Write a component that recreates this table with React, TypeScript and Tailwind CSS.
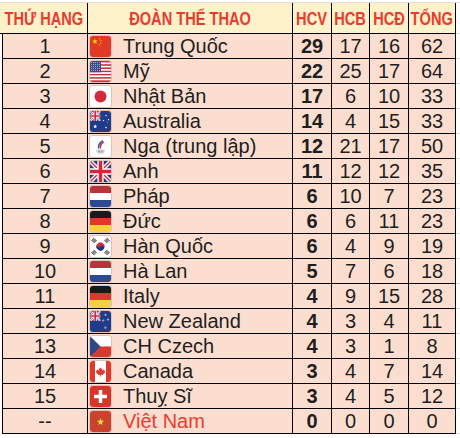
import React from "react";

type FlagCode = "cn" | "us" | "jp" | "au" | "roc" | "gb" | "nl" | "de" | "kr" | "nz" | "cz" | "ca" | "ch" | "vn";

interface MedalRow {
  rank: string;
  name: string;
  flag: FlagCode;
  gold: number;
  silver: number;
  bronze: number;
  total: number;
  highlight?: boolean;
}

const rows: MedalRow[] = [
  { rank: "1", name: "Trung Quốc", flag: "cn", gold: 29, silver: 17, bronze: 16, total: 62 },
  { rank: "2", name: "Mỹ", flag: "us", gold: 22, silver: 25, bronze: 17, total: 64 },
  { rank: "3", name: "Nhật Bản", flag: "jp", gold: 17, silver: 6, bronze: 10, total: 33 },
  { rank: "4", name: "Australia", flag: "au", gold: 14, silver: 4, bronze: 15, total: 33 },
  { rank: "5", name: "Nga (trung lập)", flag: "roc", gold: 12, silver: 21, bronze: 17, total: 50 },
  { rank: "6", name: "Anh", flag: "gb", gold: 11, silver: 12, bronze: 12, total: 35 },
  { rank: "7", name: "Pháp", flag: "nl", gold: 6, silver: 10, bronze: 7, total: 23 },
  { rank: "8", name: "Đức", flag: "de", gold: 6, silver: 6, bronze: 11, total: 23 },
  { rank: "9", name: "Hàn Quốc", flag: "kr", gold: 6, silver: 4, bronze: 9, total: 19 },
  { rank: "10", name: "Hà Lan", flag: "nl", gold: 5, silver: 7, bronze: 6, total: 18 },
  { rank: "11", name: "Italy", flag: "de", gold: 4, silver: 9, bronze: 15, total: 28 },
  { rank: "12", name: "New Zealand", flag: "nz", gold: 4, silver: 3, bronze: 4, total: 11 },
  { rank: "13", name: "CH Czech", flag: "cz", gold: 4, silver: 3, bronze: 1, total: 8 },
  { rank: "14", name: "Canada", flag: "ca", gold: 3, silver: 4, bronze: 7, total: 14 },
  { rank: "15", name: "Thuỵ Sĩ", flag: "ch", gold: 3, silver: 4, bronze: 5, total: 12 },
  { rank: "--", name: "Việt Nam", flag: "vn", gold: 0, silver: 0, bronze: 0, total: 0, highlight: true },
];

function star(cx: number, cy: number, r: number, rot = -90) {
  const pts: string[] = [];
  for (let i = 0; i < 10; i++) {
    const rr = i % 2 === 0 ? r : r * 0.4;
    const a = ((rot + i * 36) * Math.PI) / 180;
    pts.push(`${(cx + rr * Math.cos(a)).toFixed(2)},${(cy + rr * Math.sin(a)).toFixed(2)}`);
  }
  return pts.join(" ");
}

function UnionJack({ x, y, w, h }: { x: number; y: number; w: number; h: number }) {
  return (
    <svg x={x} y={y} width={w} height={h} viewBox="0 0 60 60" preserveAspectRatio="none">
      <rect width="60" height="60" fill="#1f3c8c" />
      <path d="M0 0L60 60M60 0L0 60" stroke="#fff" strokeWidth="12" />
      <path d="M0 0L60 60M60 0L0 60" stroke="#d0283a" strokeWidth="4" />
      <path d="M30 0V60M0 30H60" stroke="#fff" strokeWidth="18" />
      <path d="M30 0V60M0 30H60" stroke="#d0283a" strokeWidth="10" />
    </svg>
  );
}

function Trigram({ x, y, rot }: { x: number; y: number; rot: number }) {
  return (
    <g transform={`rotate(${rot} ${x} ${y})`} fill="#222">
      <rect x={x - 2} y={y - 1.9} width="4" height="0.8" />
      <rect x={x - 2} y={y - 0.4} width="4" height="0.8" />
      <rect x={x - 2} y={y + 1.1} width="4" height="0.8" />
    </g>
  );
}

function FlagArt({ code }: { code: FlagCode }) {
  switch (code) {
    case "cn":
      return (
        <>
          <rect width="21" height="21" fill="#e03a26" />
          <polygon points={star(5, 5.5, 3)} fill="#ffd800" />
          <polygon points={star(9.5, 2.5, 1)} fill="#ffd800" />
          <polygon points={star(11, 4.5, 1)} fill="#ffd800" />
          <polygon points={star(11, 7, 1)} fill="#ffd800" />
          <polygon points={star(9.5, 9, 1)} fill="#ffd800" />
        </>
      );
    case "us": {
      const stripes = [];
      for (let i = 0; i < 13; i++) {
        stripes.push(
          <rect key={i} y={(21 / 13) * i} width="21" height={21 / 13 + 0.05} fill={i % 2 === 0 ? "#c1303f" : "#ffffff"} />
        );
      }
      const dots = [];
      for (let r = 0; r < 5; r++) {
        for (let c = 0; c < 5; c++) {
          dots.push(<rect key={`${r}-${c}`} x={1 + c * 2} y={1 + r * 2} width="0.8" height="0.8" fill="#d8dcef" />);
        }
      }
      return (
        <>
          {stripes}
          <rect width="11" height="11.3" fill="#404a86" />
          {dots}
        </>
      );
    }
    case "jp":
      return (
        <>
          <rect width="21" height="21" fill="#ffffff" />
          <circle cx="10.5" cy="10.5" r="6" fill="#cf2b3d" />
        </>
      );
    case "au":
      return (
        <>
          <rect width="21" height="21" fill="#1f3c8c" />
          <UnionJack x={0} y={0} w={10.5} h={10} />
          <polygon points={star(5.2, 15.5, 2.2)} fill="#fff" />
          <polygon points={star(16, 4.5, 1.1)} fill="#fff" />
          <polygon points={star(13.5, 9.5, 1.1)} fill="#fff" />
          <polygon points={star(18.5, 8.5, 1.1)} fill="#fff" />
          <polygon points={star(16, 16.5, 1.2)} fill="#fff" />
          <polygon points={star(17.5, 11.5, 0.6)} fill="#fff" />
        </>
      );
    case "roc":
      return (
        <>
          <rect width="21" height="21" fill="#ffffff" />
          <path d="M8.6 12.5C8 9.5 9.5 6.8 12.6 4.6" stroke="#2d55b8" strokeWidth="1.5" fill="none" />
          <path d="M10.4 12.5C9.9 9.8 11.2 7.4 13.8 5.8" stroke="#d52b2b" strokeWidth="1.5" fill="none" />
          <g fill="none" stroke="#8a8a8a" strokeWidth="0.5">
            <circle cx="7.9" cy="15" r="1.2" />
            <circle cx="10.5" cy="15" r="1.2" />
            <circle cx="13.1" cy="15" r="1.2" />
            <circle cx="9.2" cy="16.2" r="1.2" />
            <circle cx="11.8" cy="16.2" r="1.2" />
          </g>
        </>
      );
    case "gb":
      return <UnionJack x={0} y={0} w={21} h={21} />;
    case "nl":
      return (
        <>
          <rect width="21" height="7" fill="#b8343a" />
          <rect y="7" width="21" height="7" fill="#ffffff" />
          <rect y="14" width="21" height="7" fill="#2c4a92" />
        </>
      );
    case "de":
      return (
        <>
          <rect width="21" height="7" fill="#1a1a1a" />
          <rect y="7" width="21" height="7" fill="#e0392b" />
          <rect y="14" width="21" height="7" fill="#f9cf3b" />
        </>
      );
    case "kr":
      return (
        <>
          <rect width="21" height="21" fill="#ffffff" />
          <g transform="rotate(33.7 10.5 10.5)">
            <circle cx="10.5" cy="10.5" r="4" fill="#cd2e3a" />
            <path d="M6.5 10.5A4 4 0 0 0 14.5 10.5A2 2 0 0 0 10.5 10.5A2 2 0 0 1 6.5 10.5Z" fill="#0f3c8a" />
          </g>
          <Trigram x={4} y={4.5} rot={-45} />
          <Trigram x={17} y={4.5} rot={45} />
          <Trigram x={4} y={16.5} rot={45} />
          <Trigram x={17} y={16.5} rot={-45} />
        </>
      );
    case "nz":
      return (
        <>
          <rect width="21" height="21" fill="#1f3c8c" />
          <UnionJack x={0} y={0} w={10.5} h={10} />
          <polygon points={star(15.5, 16.5, 1.6)} fill="#fff" />
          <polygon points={star(15.5, 16.5, 1)} fill="#d0283a" />
          <polygon points={star(13.3, 9.5, 1.4)} fill="#fff" />
          <polygon points={star(13.3, 9.5, 0.9)} fill="#d0283a" />
          <polygon points={star(18, 8.5, 1.4)} fill="#fff" />
          <polygon points={star(18, 8.5, 0.9)} fill="#d0283a" />
          <polygon points={star(15.5, 4, 1.4)} fill="#fff" />
          <polygon points={star(15.5, 4, 0.9)} fill="#d0283a" />
        </>
      );
    case "cz":
      return (
        <>
          <rect width="21" height="10.5" fill="#ffffff" />
          <rect y="10.5" width="21" height="10.5" fill="#d73a2f" />
          <polygon points="0,0 10.5,10.5 0,21" fill="#2c4a8a" />
        </>
      );
    case "ca":
      return (
        <>
          <rect width="21" height="21" fill="#ffffff" />
          <rect width="5" height="21" fill="#dc3a2c" />
          <rect x="16" width="5" height="21" fill="#dc3a2c" />
          <path
            d="M10.5 6.2L11.3 7.8L12.4 7.4L12 9.8L13.6 8.6L14 9.5L15.1 9.3L14.6 11.1L15.3 11.5L12.8 13.2L13 14L11 13.8L10.8 15.8L10.2 15.8L10 13.8L8 14L8.2 13.2L5.7 11.5L6.4 11.1L5.9 9.3L7 9.5L7.4 8.6L9 9.8L8.6 7.4L9.7 7.8Z"
            fill="#dc3a2c"
          />
        </>
      );
    case "ch":
      return (
        <>
          <rect width="21" height="21" fill="#d9342a" />
          <rect x="8.75" y="4" width="3.5" height="13" fill="#fff" />
          <rect x="4" y="8.75" width="13" height="3.5" fill="#fff" />
        </>
      );
    case "vn":
      return (
        <>
          <rect width="21" height="21" fill="#c9432f" />
          <polygon points={star(10.5, 11, 3.8)} fill="#ffe53b" />
        </>
      );
  }
}

function Flag({ code }: { code: FlagCode }) {
  return (
    <div className="w-[21px] h-[21px] shrink-0 rounded-[3px] overflow-hidden shadow-[0_0_0_1px_rgba(0,0,0,0.12)]">
      <svg width="21" height="21" viewBox="0 0 21 21" className="block">
        <FlagArt code={code} />
      </svg>
    </div>
  );
}

function HeadCell({ label, className }: { label: string; className: string }) {
  return (
    <div className={`${className} h-full flex items-center justify-center border-r border-black pt-[2px]`}>
      <span className="inline-block whitespace-nowrap scale-x-[0.79] text-[18.5px] font-bold leading-none text-[#eb3b2e]">
        {label}
      </span>
    </div>
  );
}

export default function App() {
  return (
    <div
      className="w-[460px] h-[438px] bg-white overflow-hidden"
      style={{ fontFamily: '"Liberation Sans", Arial, Helvetica, sans-serif' }}
    >
      {/* spreadsheet strip above the table */}
      <div className="h-[3px] border-b border-[#dedede]" />

      {/* Header */}
      <div className="flex">
        <div className="flex w-[456px] h-[31px] border-b border-black bg-[#fef2cb]">
          <HeadCell label="THỨ HẠNG" className="w-[88px]" />
          <HeadCell label="ĐOÀN THỂ THAO" className="w-[205px]" />
          <HeadCell label="HCV" className="w-[39px]" />
          <HeadCell label="HCB" className="w-[38px]" />
          <HeadCell label="HCĐ" className="w-[39px]" />
          <HeadCell label="TỔNG" className="w-[47px]" />
        </div>
        <div className="flex-1 border-b border-[#dadada]" />
      </div>

      {/* Body */}
      {rows.map((r) => (
        <div key={r.rank + r.name} className="flex">
          <div className="w-[2px]" />
          <div className="flex w-[454px] h-[25px] border-l border-b border-black bg-[#fbded0] text-[20px] leading-none text-[#1e1e1e]">
            <div className="w-[85px] flex items-center justify-center border-r border-black">{r.rank}</div>
            <div className="w-[205px] flex items-center gap-[12px] pl-[2px] border-r border-black">
              <Flag code={r.flag} />
              <span className={`whitespace-nowrap ${r.highlight ? "text-[#ec3b2f]" : ""}`}>{r.name}</span>
            </div>
            <div className="w-[39px] flex items-center justify-center border-r border-black font-bold">{r.gold}</div>
            <div className="w-[38px] flex items-center justify-center border-r border-black">{r.silver}</div>
            <div className="w-[39px] flex items-center justify-center border-r border-black">{r.bronze}</div>
            <div className="w-[47px] flex items-center justify-center border-r border-black">{r.total}</div>
          </div>
          <div className="flex-1 border-b border-[#dadada]" />
        </div>
      ))}
    </div>
  );
}
